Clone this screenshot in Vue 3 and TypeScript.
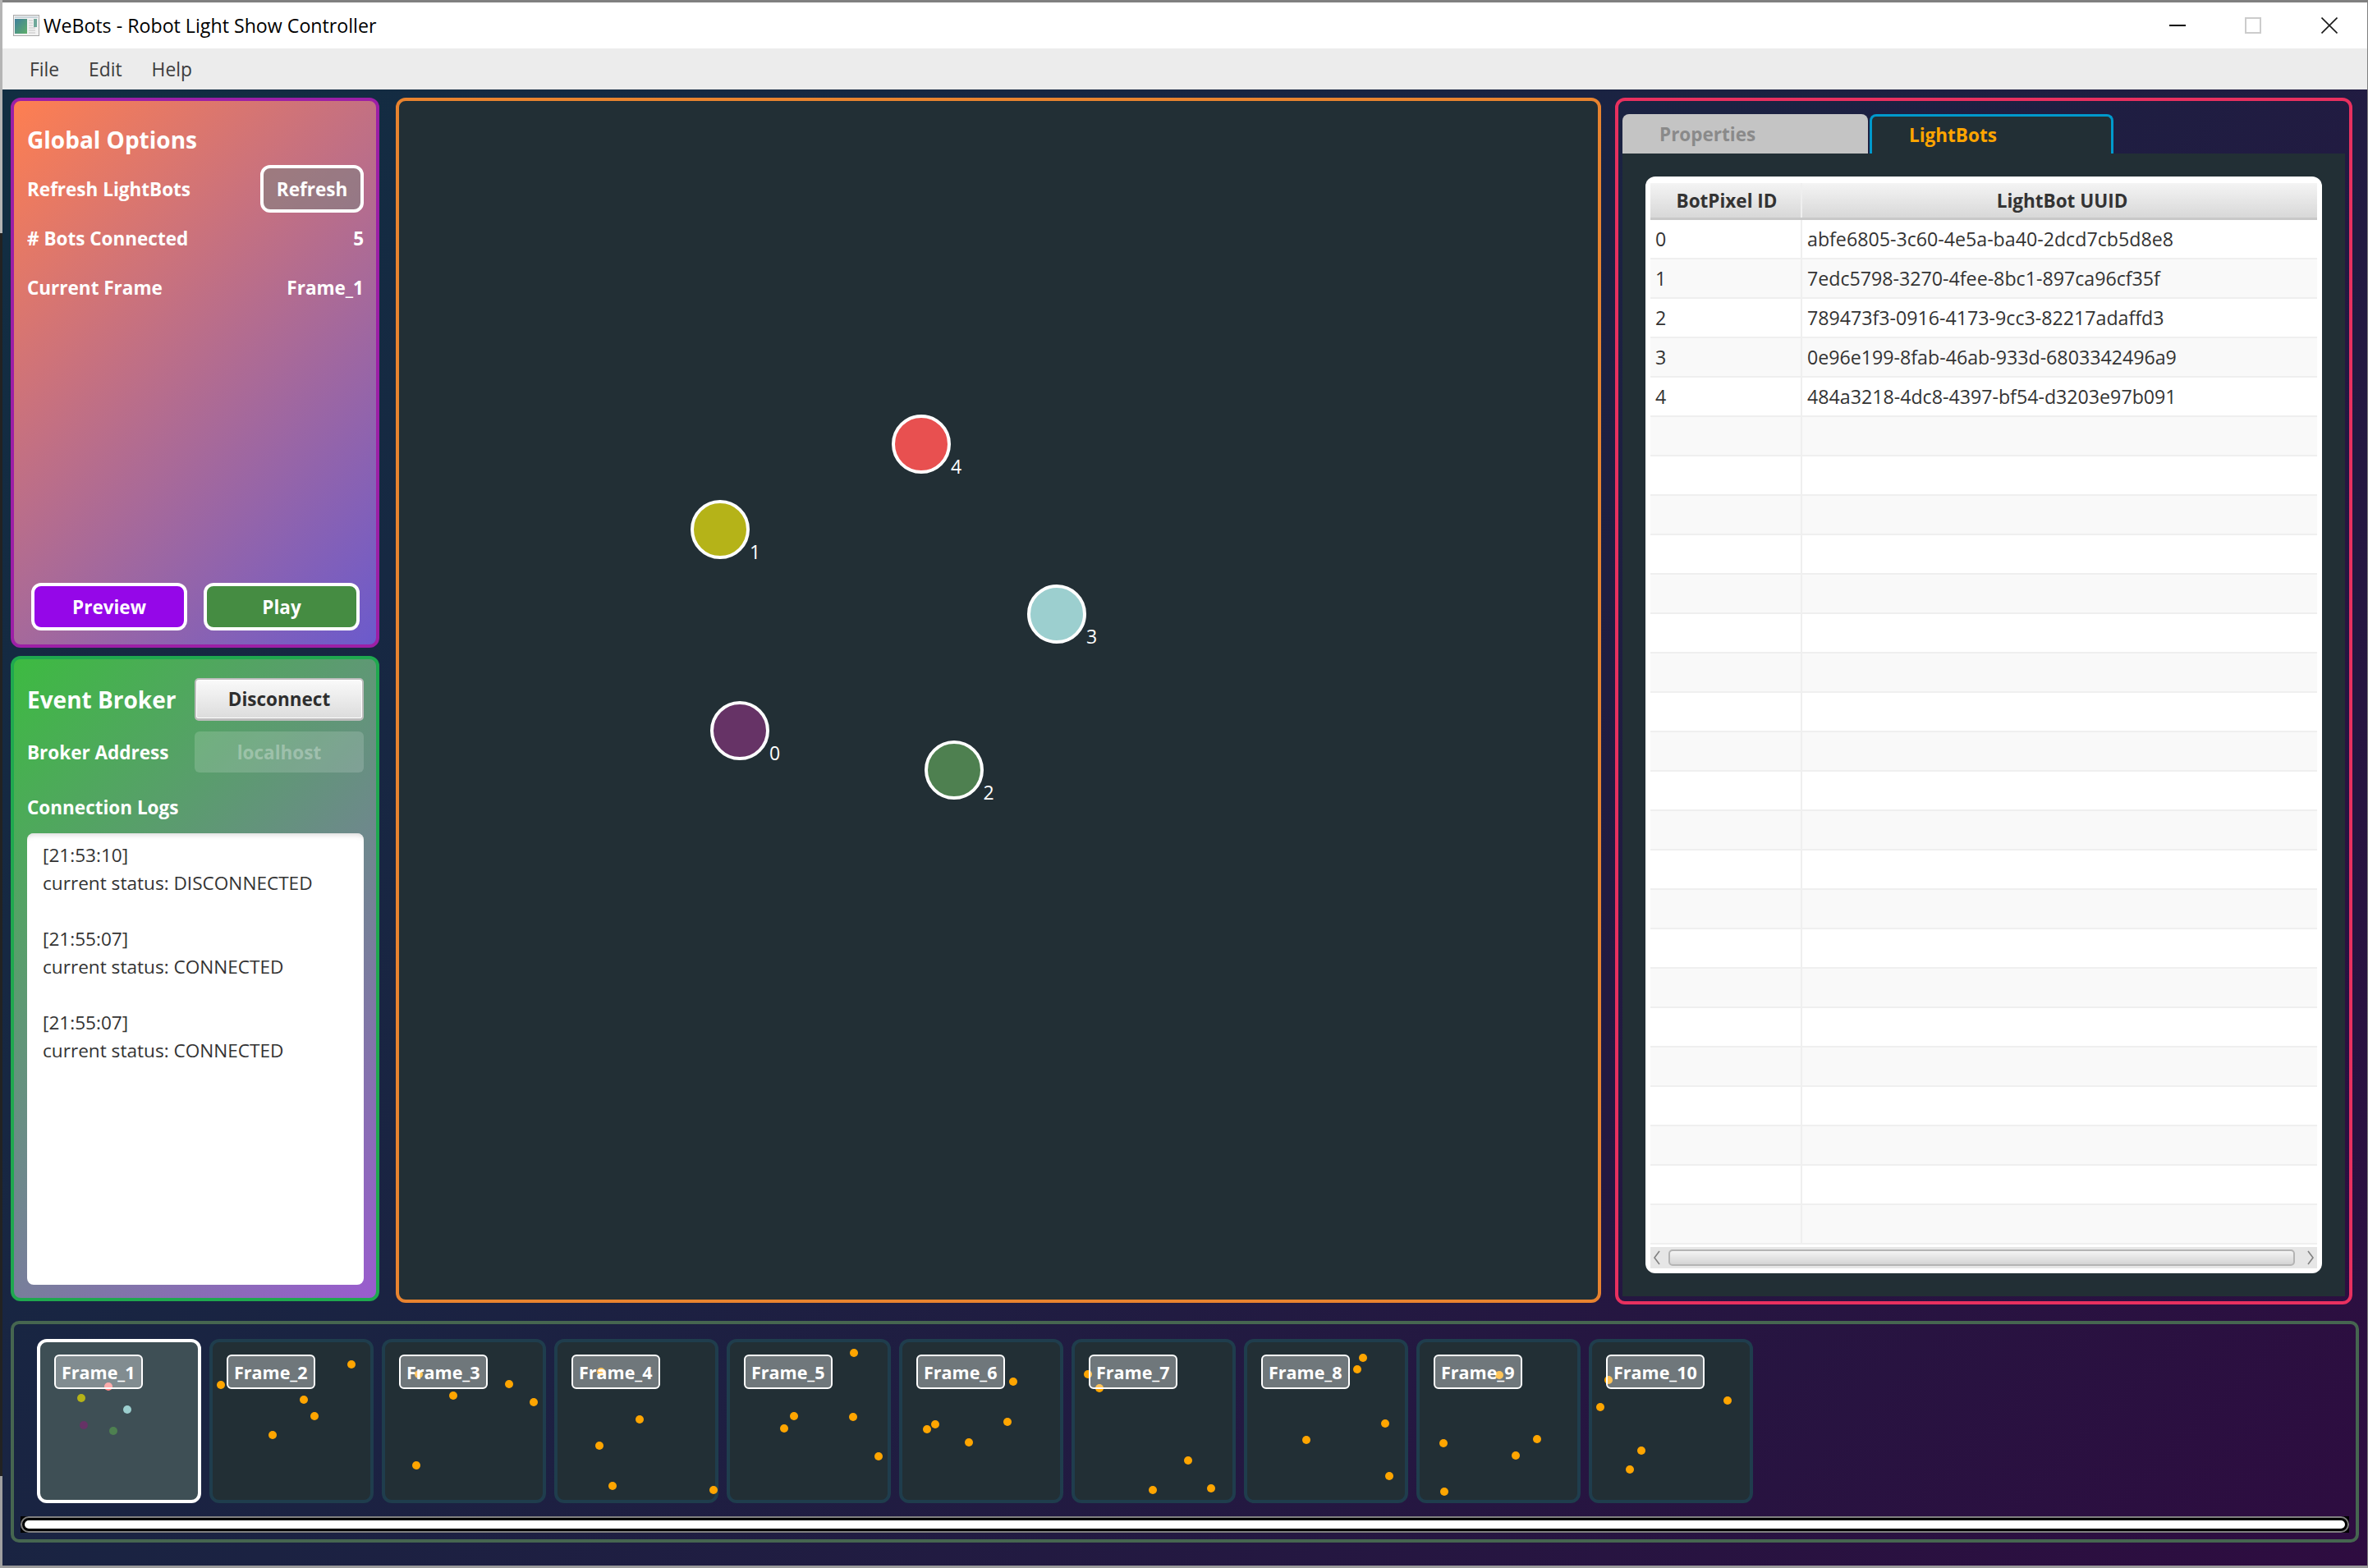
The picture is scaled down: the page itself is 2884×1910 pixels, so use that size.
<script setup lang="ts">
// WeBots light show controller: one static frame of the main window
interface Bot { id: number; x: number; y: number; color: string }
interface Row { id: string; uuid: string }

const menus = ['File', 'Edit', 'Help']

// centres inside the canvas
const bots: Bot[] = [
  { id: 0, x: 415, y: 767, color: '#663366' },
  { id: 1, x: 391, y: 522, color: '#b5b318' },
  { id: 2, x: 675.5, y: 815, color: '#4e8050' },
  { id: 3, x: 801, y: 625, color: '#9ccfcf' },
  { id: 4, x: 636, y: 418, color: '#e85050' },
]

const uuids = [
  'abfe6805-3c60-4e5a-ba40-2dcd7cb5d8e8',
  '7edc5798-3270-4fee-8bc1-897ca96cf35f',
  '789473f3-0916-4173-9cc3-82217adaffd3',
  '0e96e199-8fab-46ab-933d-6803342496a9',
  '484a3218-4dc8-4397-bf54-d3203e97b091',
]

const rows: Row[] = Array.from({ length: 26 }, (_, i) => ({
  id: i < uuids.length ? String(i) : '',
  uuid: uuids[i] ?? '',
}))

const logs = [
  { time: '[21:53:10]', status: 'current status: DISCONNECTED' },
  { time: '[21:55:07]', status: 'current status: CONNECTED' },
  { time: '[21:55:07]', status: 'current status: CONNECTED' },
]

const ORANGE = '#ffa500'

const framePoints: [number, number][][] = [
  // frame 1 order: red, yellow, teal, purple, green
  [[87, 58], [54, 72], [110, 86], [57, 105], [93, 112]],
  [[14, 56], [173, 31], [115, 74], [128, 94], [77, 117]],
  [[45, 43], [155, 55], [87, 69], [185, 77], [42, 154]],
  [[57, 40], [104, 98], [55, 130], [71, 179], [194, 184]],
  [[155, 17], [82, 94], [154, 95], [70, 109], [185, 143]],
  [[44, 104], [34, 110], [85, 126], [139, 52], [132, 101]],
  [[20, 43], [34, 60], [142, 148], [99, 184], [170, 182]],
  [[145, 23], [138, 37], [172, 103], [76, 123], [177, 167]],
  [[33, 127], [34, 186], [101, 44], [147, 122], [121, 142]],
  [[24, 50], [14, 83], [169, 75], [64, 136], [50, 159]],
]

const frameOneColors = ['#ff8080', '#b5b318', '#9ccfcf', '#663366', '#4e8050']

const frames = framePoints.map((points, i) => ({
  name: `Frame_${i + 1}`,
  active: i === 0,
  dots: points.map(([x, y], j) => ({ x, y, color: i === 0 ? frameOneColors[j] : ORANGE })),
}))
</script>

<template>
  <div class="desktop">
    <div class="window">
      <header class="titlebar">
        <svg class="app-icon" width="32" height="26" viewBox="0 0 32 26">
          <defs>
            <linearGradient id="pane" x1="0" y1="0" x2="1" y2="1">
              <stop offset="0" stop-color="#3f7f9c" />
              <stop offset="1" stop-color="#5fae6a" />
            </linearGradient>
          </defs>
          <rect x="0.5" y="0.5" width="31" height="25" fill="#f2f2f2" stroke="#a8a8a8" />
          <rect x="2" y="2" width="28" height="2" fill="#c9d4da" />
          <rect x="2" y="5" width="15" height="18" fill="url(#pane)" />
          <rect x="25" y="5" width="4" height="10" fill="#6fa89a" />
          <path d="M19 7h5M19 10h5M19 13h5M19 16h8M19 19h8M19 22h8" stroke="#c4c4c4" stroke-width="1" />
        </svg>
        <span class="title">WeBots - Robot Light Show Controller</span>
        <div class="controls">
          <span class="control"><i class="minimize"></i></span>
          <span class="control"><i class="maximize"></i></span>
          <span class="control">
            <svg width="20" height="20" viewBox="0 0 20 20">
              <path d="M0.5 0.5L19.5 19.5M19.5 0.5L0.5 19.5" stroke="#1a1a1a" stroke-width="1.6" />
            </svg>
          </span>
        </div>
      </header>

      <nav class="menubar">
        <span v-for="menu in menus" :key="menu" class="menu-item">{{ menu }}</span>
      </nav>

      <main class="content">
        <div class="workspace">
          <div class="left-col">
            <section class="panel panel-options">
              <div class="row row-title"><h2>Global Options</h2></div>
              <div class="row">
                <span>Refresh LightBots</span>
                <button class="btn btn-ghost">Refresh</button>
              </div>
              <div class="row"><span># Bots Connected</span><span>5</span></div>
              <div class="row"><span>Current Frame</span><span>Frame_1</span></div>
              <div class="actions">
                <button class="btn btn-preview">Preview</button>
                <button class="btn btn-play">Play</button>
              </div>
            </section>

            <section class="panel panel-broker">
              <div class="broker-head">
                <h2>Event Broker</h2>
                <button class="btn-disconnect">Disconnect</button>
              </div>
              <div class="broker-address">
                <span>Broker Address</span>
                <div class="address-input">localhost</div>
              </div>
              <div class="logs-label">Connection Logs</div>
              <div class="logs">
                <div v-for="(log, i) in logs" :key="i" class="log-entry">
                  <div>{{ log.time }}</div>
                  <div>{{ log.status }}</div>
                </div>
              </div>
            </section>
          </div>

          <section class="canvas">
            <div
              v-for="bot in bots"
              :key="bot.id"
              class="bot"
              :style="{ left: `${bot.x - 36}px`, top: `${bot.y - 36}px`, background: bot.color }"
            >
              <span class="bot-label">{{ bot.id }}</span>
            </div>
          </section>

          <section class="side">
            <div class="tabs">
              <div class="tab">Properties</div>
              <div class="tab tab-active">LightBots</div>
            </div>
            <div class="tab-pane">
              <div class="table">
                <div class="thead">
                  <div class="th th-id">BotPixel ID</div>
                  <div class="th th-uuid">LightBot UUID</div>
                </div>
                <div class="tbody">
                  <div v-for="(row, i) in rows" :key="i" class="tr" :class="{ odd: i % 2 === 1 }">
                    <div class="td td-id">{{ row.id }}</div>
                    <div class="td">{{ row.uuid }}</div>
                  </div>
                </div>
                <div class="hscroll">
                  <svg width="12" height="24" viewBox="0 0 12 24">
                    <path d="M9 4L3 12L9 20" fill="none" stroke="#808080" stroke-width="1.6" />
                  </svg>
                  <div class="hscroll-thumb"></div>
                  <svg width="12" height="24" viewBox="0 0 12 24">
                    <path d="M3 4L9 12L3 20" fill="none" stroke="#808080" stroke-width="1.6" />
                  </svg>
                </div>
              </div>
            </div>
          </section>
        </div>

        <section class="strip">
          <div class="thumbs">
            <div v-for="frame in frames" :key="frame.name" class="thumb" :class="{ active: frame.active }">
              <span
                v-for="(dot, i) in frame.dots"
                :key="i"
                class="dot"
                :style="{ left: `${dot.x - 9}px`, top: `${dot.y - 9}px`, background: dot.color }"
              ></span>
              <span class="thumb-label">{{ frame.name }}</span>
            </div>
          </div>
          <div class="strip-scroll">
            <div class="strip-rail"><div class="strip-thumb"></div></div>
          </div>
        </section>
      </main>
    </div>
  </div>
</template>

<style>
body {
  margin: 0;
}
</style>

<style scoped>
.desktop {
  width: 2884px;
  height: 1910px;
  box-sizing: border-box;
  padding-left: 3px;
  background: linear-gradient(to bottom, #b4b4b4 0 284px, #222222 284px 1798px, #a0a0a0 1798px);
  font-family: "Open Sans", "Noto Sans", sans-serif;
  overflow: hidden;
}

.window {
  height: 100%;
  box-sizing: border-box;
  display: flex;
  flex-direction: column;
  border-top: 3px solid #808080;
  border-bottom: 3px solid #9a9a9a;
  border-right: 1px solid #808080;
}

.titlebar {
  height: 56px;
  flex: none;
  display: flex;
  align-items: center;
  background: #ffffff;
  padding-left: 13px;
}

.app-icon {
  flex: none;
  margin-right: 5px;
}

.title {
  font-size: 23.2px;
  color: #000000;
}

.controls {
  margin-left: auto;
  display: flex;
  align-self: stretch;
}

.control {
  width: 92.5px;
  display: flex;
  align-items: center;
  justify-content: center;
}

.minimize {
  display: block;
  width: 20px;
  height: 2px;
  background: #000000;
}

.maximize {
  display: block;
  width: 20px;
  height: 20px;
  box-sizing: border-box;
  border: 2px solid #cccccc;
}

.menubar {
  height: 50px;
  flex: none;
  display: flex;
  align-items: center;
  padding-left: 15px;
  background: #ececec;
}

.menu-item {
  padding: 0 18px;
  font-size: 22.8px;
  color: #3c3c3c;
}

.content {
  flex: 1;
  min-height: 0;
  padding: 10px 0 0 10px;
  background: linear-gradient(135deg, #112e42 0%, #1b2242 45%, #2e0c40 100%);
}

.workspace {
  display: grid;
  grid-template-columns: 449px 1468px 898px;
  column-gap: 20px;
  align-items: start;
}

.workspace > .side {
  width: 898px;
  margin-left: -3px;
}

.left-col {
  display: flex;
  flex-direction: column;
  gap: 10px;
}

.panel {
  box-sizing: border-box;
  display: flex;
  flex-direction: column;
  border-width: 4px;
  border-style: solid;
  border-radius: 12px;
  padding: 17px 15px 17px 16px;
  color: #ffffff;
  font-size: 22.5px;
  font-weight: 700;
  background-origin: border-box;
}

.panel h2 {
  margin: 0;
  font-size: 28px;
  font-weight: 700;
}

.panel-options {
  height: 670px;
  border-color: #9c1fa6;
  background-image: linear-gradient(135deg, #ff7f50 0%, #6a5acd 100%);
}

.row {
  height: 60px;
  flex: none;
  display: flex;
  align-items: center;
  justify-content: space-between;
}

.btn {
  height: 58px;
  box-sizing: border-box;
  border: 4px solid #ffffff;
  border-radius: 12px;
  color: #ffffff;
  font: inherit;
  padding: 0;
}

.btn-ghost {
  width: 126px;
  background: rgba(128, 128, 128, 0.6);
}

.actions {
  margin-top: auto;
  display: flex;
  gap: 20px;
  padding: 0 5px;
}

.btn-preview {
  width: 190px;
  background: #9507e8;
}

.btn-play {
  width: 190px;
  background: #458c42;
}

.panel-broker {
  height: 786px;
  border-color: #1fa84f;
  background-image: linear-gradient(135deg, #3cbb40 0%, #9b5bd0 100%);
  padding: 23px 15px 16px 16px;
}

.broker-head {
  height: 52px;
  flex: none;
  display: flex;
  align-items: center;
  justify-content: space-between;
}

.btn-disconnect {
  width: 206px;
  height: 52px;
  box-sizing: border-box;
  border: 2px solid #bdbdbd;
  border-bottom-width: 3px;
  border-radius: 5px;
  background: linear-gradient(to bottom, #fafafa, #dcdcdc);
  box-shadow: inset 0 0 0 1px #ffffff;
  color: #2e2e2e;
  font: inherit;
  padding: 0;
}

.broker-address {
  height: 50px;
  flex: none;
  margin-top: 13px;
  display: flex;
  align-items: center;
  justify-content: space-between;
}

.address-input {
  width: 206px;
  height: 50px;
  display: flex;
  align-items: center;
  justify-content: center;
  border-radius: 6px;
  background: rgba(255, 255, 255, 0.16);
  color: rgba(255, 255, 255, 0.3);
}

.logs-label {
  height: 34px;
  flex: none;
  margin-top: 25px;
  display: flex;
  align-items: center;
}

.logs {
  flex: 1;
  margin-top: 15px;
  padding: 10px 19px;
  border-radius: 8px;
  background: #ffffff;
  box-shadow: inset 0 8px 6px -6px #d8d8d8;
  color: #333333;
  font-size: 22.6px;
  font-weight: 400;
  line-height: 34px;
}

.log-entry {
  height: 102px;
}

.canvas {
  position: relative;
  height: 1468px;
  box-sizing: border-box;
  border: 4px solid #e8832f;
  border-radius: 12px;
  background: #222f35;
}

.bot {
  position: absolute;
  width: 72px;
  height: 72px;
  box-sizing: border-box;
  border: 4px solid #ffffff;
  border-radius: 50%;
}

.bot-label {
  position: absolute;
  left: calc(100% + 4px);
  top: 47px;
  color: #ffffff;
  font-size: 23px;
  line-height: 24px;
}

.side {
  height: 1470px;
  box-sizing: border-box;
  padding: 16px 5px 6px;
  border: 4px solid #e8305f;
  border-radius: 12px;
  display: flex;
  flex-direction: column;
}

.tabs {
  height: 48px;
  flex: none;
  display: flex;
  gap: 2px;
}

.tab {
  width: 299px;
  box-sizing: border-box;
  padding-left: 45px;
  display: flex;
  align-items: center;
  background: #c4c4c4;
  border-radius: 8px 8px 0 0;
  color: #8a8a8a;
  font-size: 22.5px;
  font-weight: 700;
}

.tab-active {
  width: 297px;
  padding-left: 45px;
  border: 3px solid #0099cc;
  border-bottom: none;
  background: #222f35;
  color: #ffa500;
}

.tab-pane {
  flex: 1;
  padding: 28px;
  background: #222f35;
  display: flex;
}

.table {
  flex: 1;
  box-sizing: border-box;
  padding: 8px 6px 6px;
  display: flex;
  flex-direction: column;
  background: #ffffff;
  border-radius: 12px;
  color: #333333;
  font-size: 23.2px;
}

.thead {
  height: 45px;
  flex: none;
  display: flex;
  box-sizing: border-box;
  border-bottom: 3px solid #c8c8c8;
  background: linear-gradient(to bottom, #f4f4f4, #d8d8d8);
}

.th {
  display: flex;
  align-items: center;
  justify-content: center;
  font-size: 22.5px;
  font-weight: 700;
}

.th-id {
  width: 185px;
  flex: none;
  box-sizing: border-box;
  padding-left: 3px;
  border-right: 2px solid #efefef;
}

.th-uuid {
  flex: 1;
  padding-left: 6px;
}

.tbody {
  flex: 1;
  min-height: 0;
  overflow: hidden;
}

.tr {
  height: 48px;
  box-sizing: border-box;
  display: flex;
  align-items: center;
  border-bottom: 2px solid #efefef;
  background: #ffffff;
}

.tr.odd {
  background: #f9f9f9;
}

.td {
  height: 100%;
  display: flex;
  align-items: center;
  padding-left: 6px;
}

.td-id {
  width: 185px;
  flex: none;
  box-sizing: border-box;
  border-right: 2px solid #efefef;
  padding-left: 6px;
}

.hscroll {
  height: 26px;
  flex: none;
  display: flex;
  align-items: center;
  padding: 0 2px;
  background: #e6e6e6;
}

.hscroll-thumb {
  flex: 1;
  height: 20px;
  margin: 0 13px 0 8px;
  box-sizing: border-box;
  border: 2px solid #b4b4b4;
  border-radius: 5px;
  background: linear-gradient(to bottom, #f4f4f4, #d4d4d4);
}

.strip {
  width: 2860px;
  height: 270px;
  margin-top: 20px;
  box-sizing: border-box;
  padding: 18px 8px 8px;
  border: 4px solid #466650;
  border-radius: 10px;
}

.thumbs {
  display: flex;
  gap: 10px;
  padding-left: 20px;
}

.thumb {
  position: relative;
  width: 200px;
  height: 200px;
  box-sizing: border-box;
  border: 4px solid #1f3d4d;
  border-radius: 12px;
  background: #222f35;
}

.thumb.active {
  border-color: #ffffff;
  background: #3e4f55;
}

.dot {
  position: absolute;
  width: 10px;
  height: 10px;
  border-radius: 50%;
}

.thumb-label {
  position: absolute;
  left: 17px;
  top: 15px;
  height: 42px;
  box-sizing: border-box;
  padding: 0 7px;
  display: flex;
  align-items: center;
  border: 2px solid #ffffff;
  border-radius: 6px;
  background: rgba(255, 255, 255, 0.35);
  color: #ffffff;
  font-size: 21.5px;
  font-weight: 700;
}

.strip-scroll {
  height: 20px;
  margin-top: 16px;
  background: #000000;
}

.strip-rail {
  height: 100%;
  box-sizing: border-box;
  border: 2px solid #808080;
  border-radius: 10px;
  padding: 3px;
}

.strip-thumb {
  height: 100%;
  border-radius: 6px;
  background: #ffffff;
}
</style>
